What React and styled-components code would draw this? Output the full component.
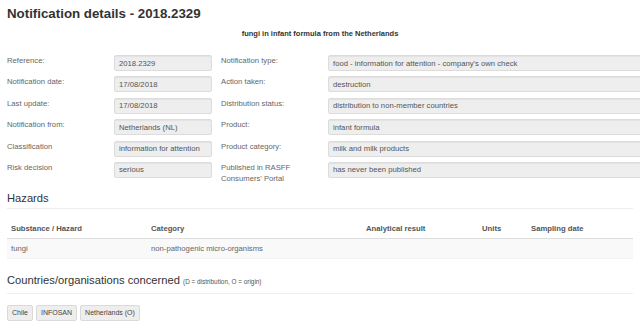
import React from "react";
import styled, { createGlobalStyle } from "styled-components";

const GlobalStyle = createGlobalStyle`
	html, body {
		margin: 0;
		padding: 0;
		background: #ffffff;
		overflow: hidden;
	}
	body {
		font-family: "Liberation Sans", Arial, Helvetica, sans-serif;
		color: #555;
	}
`;

const details = [
	["Reference:", "2018.2329", "Notification type:", "food - information for attention - company's own check"],
	["Notification date:", "17/08/2018", "Action taken:", "destruction"],
	["Last update:", "17/08/2018", "Distribution status:", "distribution to non-member countries"],
	["Notification from:", "Netherlands (NL)", "Product:", "infant formula"],
	["Classification", "information for attention", "Product category:", "milk and milk products"],
	["Risk decision", "serious", "Published in RASFF Consumers' Portal", "has never been published"],
];

const hazardColumns = [
	{ title: "Substance / Hazard", width: 140 },
	{ title: "Category", width: 215 },
	{ title: "Analytical result", width: 116 },
	{ title: "Units", width: 49 },
	{ title: "Sampling date", width: 106 },
];

const hazards = [["fungi", "non-pathogenic micro-organisms", "", "", ""]];

const countries = ["Chile", "INFOSAN", "Netherlands (O)"];

const App = () => {
	return (
		<Page>
			<GlobalStyle />
			<Title>Notification details - 2018.2329</Title>
			<Subject>fungi in infant formula from the Netherlands</Subject>

			<DetailGrid>
				{details.map(([l1, v1, l2, v2]) => (
					<React.Fragment key={l1}>
						<Label>{l1}</Label>
						<Value>{v1}</Value>
						<Label $indent>{l2}</Label>
						<Value>{v2}</Value>
					</React.Fragment>
				))}
			</DetailGrid>

			<SectionTitle>Hazards</SectionTitle>
			<HazardTable>
				<colgroup>
					{hazardColumns.map((c) => (
						<col key={c.title} style={{ width: c.width }} />
					))}
				</colgroup>
				<thead>
					<tr>
						{hazardColumns.map((c) => (
							<Th key={c.title}>{c.title}</Th>
						))}
					</tr>
				</thead>
				<tbody>
					{hazards.map((row, i) => (
						<Tr key={i}>
							{row.map((cell, j) => (
								<Td key={j}>{cell}</Td>
							))}
						</Tr>
					))}
				</tbody>
			</HazardTable>

			<SectionTitle $spaced>
				Countries/organisations concerned <Note>(D = distribution, O = origin)</Note>
			</SectionTitle>
			<Countries>
				{countries.map((c) => (
					<Country key={c}>{c}</Country>
				))}
			</Countries>
		</Page>
	);
};

export default App;

const Page = styled.div`
	width: 626px;
	padding: 0 7px;
`;

const Title = styled.h1`
	margin: 0;
	padding-top: 6px;
	font-size: 13.3px;
	line-height: 15px;
	font-weight: 700;
	color: #333;
`;

const Subject = styled.div`
	margin-top: 8px;
	text-align: center;
	font-size: 7.5px;
	line-height: 10px;
	font-weight: 700;
	color: #333;
`;

const DetailGrid = styled.div`
	display: grid;
	grid-template-columns: 107px 98px 116px 320px;
	row-gap: 5.4px;
	margin-top: 16px;
	align-items: start;
`;

const Label = styled.div`
	font-size: 7.7px;
	line-height: 11px;
	color: #666;
	padding-left: ${(p) => (p.$indent ? "9px" : "0")};
	padding-right: 12px;
`;

const Value = styled.div`
	box-sizing: border-box;
	height: 16px;
	padding: 0 4px;
	display: flex;
	align-items: center;
	white-space: nowrap;
	overflow: hidden;
	font-size: 7.7px;
	color: #555;
	background: #eeeeee;
	border: 1px solid #dcdcdc;
	border-radius: 2px;
	box-shadow: inset 0 1px 1px rgba(0, 0, 0, 0.05);
`;

const SectionTitle = styled.h2`
	margin: ${(p) => (p.$spaced ? "15px" : "8px")} 0 0;
	padding-bottom: ${(p) => (p.$spaced ? "5px" : "3px")};
	font-size: 11.2px;
	line-height: 13px;
	font-weight: 400;
	color: #333;
	border-bottom: 1px solid #eeeeee;
`;

const Note = styled.small`
	font-size: 6.4px;
	color: #555;
`;

const HazardTable = styled.table`
	width: 626px;
	margin-top: 10px;
	border-collapse: collapse;
	table-layout: fixed;
	font-size: 7.7px;
`;

const Th = styled.th`
	height: 19px;
	padding: 0 4px;
	text-align: left;
	font-weight: 700;
	color: #555;
	border-bottom: 1px solid #dddddd;
`;

const Tr = styled.tr`
	background: #f9f9f9;
`;

const Td = styled.td`
	height: 19px;
	padding: 0 4px;
	color: #666;
	border-bottom: 1px solid #f2f2f2;
`;

const Countries = styled.div`
	display: flex;
	gap: 3px;
	margin-top: 11px;
`;

const Country = styled.span`
	box-sizing: border-box;
	height: 16px;
	padding: 0 4px;
	display: inline-flex;
	align-items: center;
	font-size: 7px;
	color: #444;
	background: #eeeeee;
	border: 1px solid #dadada;
	border-radius: 2px;
`;
